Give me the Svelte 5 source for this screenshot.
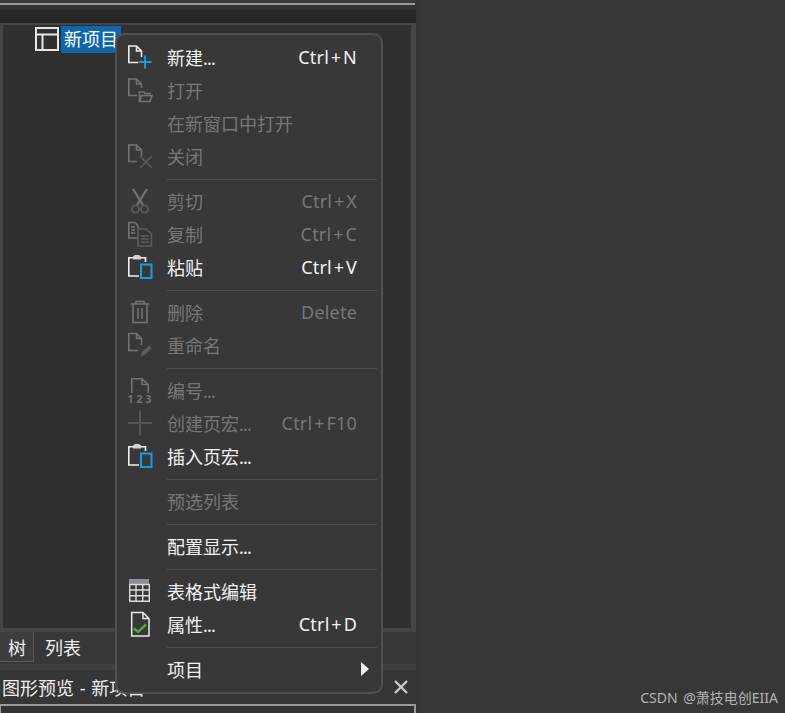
<script>
  const groups = [
    [
      { icon: 'new', label: '新建', dots: true, key: 'Ctrl+N', on: true },
      { icon: 'open', label: '打开' },
      { label: '在新窗口中打开' },
      { icon: 'close', label: '关闭' }
    ],
    [
      { icon: 'cut', label: '剪切', key: 'Ctrl+X' },
      { icon: 'copy', label: '复制', key: 'Ctrl+C' },
      { icon: 'paste', label: '粘贴', key: 'Ctrl+V', on: true }
    ],
    [
      { icon: 'trash', label: '删除', key: 'Delete' },
      { icon: 'rename', label: '重命名' }
    ],
    [
      { icon: 'number', label: '编号', dots: true },
      { icon: 'plus', label: '创建页宏', dots: true, key: 'Ctrl+F10' },
      { icon: 'paste', label: '插入页宏', dots: true, on: true }
    ],
    [{ label: '预选列表' }],
    [{ label: '配置显示', dots: true, on: true }],
    [
      { icon: 'table', label: '表格式编辑', on: true },
      { icon: 'props', label: '属性', dots: true, key: 'Ctrl+D', on: true }
    ],
    [{ label: '项目', on: true, arrow: true }]
  ];
</script>

<div class="screen">
  <div class="left">
    <div class="topfield"></div>
    <div class="topbar"></div>
    <div class="tree">
      <div class="node">
        <svg class="nodeicon" width="26" height="26" viewBox="0 0 26 26" fill="none" stroke="#e8e8e8" stroke-width="2">
          <rect x="2" y="2" width="22" height="22" />
          <path d="M2 8.5H24M8.5 8.5V24" />
        </svg>
        <span class="sel">新项目</span>
      </div>
    </div>
    <div class="tabs">
      <div class="tab active">树</div>
      <div class="tab">列表</div>
    </div>
    <div class="band"></div>
    <div class="titlebar">
      <span class="title">图形预览 - 新项目</span>
      <svg width="14" height="14" viewBox="0 0 14 14" stroke="#c8c8c8" stroke-width="2.4">
        <path d="M1 1L13 13M13 1L1 13" />
      </svg>
    </div>
    <div class="bottomfield"></div>
  </div>
  <div class="right"></div>

  <div class="menu">
    {#each groups as group, g}
      {#if g > 0}
        <div class="sep"></div>
      {/if}
      {#each group as item}
        <div class="row" class:on={item.on}>
          <div class="ico">
            {#if item.icon === 'new'}
              <svg width="30" height="30" viewBox="0 0 30 30" fill="none" stroke="#ececec" stroke-width="1.6">
                <path d="M13 20.5H3.8V4H11.5L16.5 9V15M11.5 4V9H16.5" />
                <path d="M20 13.5V26.5M13.5 20H26.5" stroke="#1f9ce4" stroke-width="1.8" />
              </svg>
            {:else if item.icon === 'open'}
              <svg width="30" height="30" viewBox="0 0 30 30" fill="none" stroke="#737373" stroke-width="1.6">
                <path d="M12 20.5H3.8V4H11.5L16.5 9V13M11.5 4V9H16.5" />
                <path d="M14.5 26.5V17H19L20 18.5H26M14.5 26.5H25L27 20.5H16.5Z" stroke-width="1.6" />
              </svg>
            {:else if item.icon === 'close'}
              <svg width="30" height="30" viewBox="0 0 30 30" fill="none" stroke="#737373" stroke-width="1.6">
                <path d="M12 20.5H3.8V4H11.5L16.5 9V15M11.5 4V9H16.5" />
                <path d="M15 15L27 27M27 15L15 27" stroke="#5c5c5c" />
              </svg>
            {:else if item.icon === 'cut'}
              <svg width="30" height="30" viewBox="0 0 30 30" fill="none" stroke="#757575" stroke-width="2.2">
                <path d="M8 3L18 19M22 3L12 19" />
                <circle cx="10.5" cy="23" r="3.6" stroke="#5c5c5c" stroke-width="1.7" />
                <circle cx="19.5" cy="23" r="3.6" stroke="#5c5c5c" stroke-width="1.7" />
              </svg>
            {:else if item.icon === 'copy'}
              <svg width="30" height="30" viewBox="0 0 30 30" fill="none" stroke="#737373" stroke-width="1.6">
                <path d="M12 19H3.8V3.5H10L13 6.5V9M6 8H10M6 11H10M6 14H10" />
                <path d="M13 27V10H21L26.5 15V27Z" stroke="#5c5c5c" />
                <path d="M16 17H24M16 20H24M16 23H24" stroke="#5c5c5c" />
              </svg>
            {:else if item.icon === 'paste'}
              <svg width="30" height="30" viewBox="0 0 30 30" fill="none" stroke="#f0f0f0" stroke-width="1.6">
                <path d="M14 24H3.8V5.8H8M16 5.8H20.5V10" />
                <path d="M8 7.5V4.5L10 3H14L16 4.5V7.5Z" fill="#d4d4d4" stroke="none" />
                <rect x="16" y="12.5" width="10.5" height="13.5" stroke="#1a9ae0" stroke-width="2" />
              </svg>
            {:else if item.icon === 'trash'}
              <svg width="30" height="30" viewBox="0 0 30 30" fill="none" stroke="#737373" stroke-width="1.6">
                <path d="M6 7H24M11 7V4.5H19V7M8 7V25.5H22V7M13 11V22M17 11V22" />
              </svg>
            {:else if item.icon === 'rename'}
              <svg width="30" height="30" viewBox="0 0 30 30" fill="none" stroke="#737373" stroke-width="1.6">
                <path d="M13 20.5H3.8V3.5H11.5L16.5 8.5V15M11.5 3.5V8.5H16.5" />
                <path d="M15.5 26.5L17 22L24 15.5L27 18L20 24.8Z" fill="#5c5c5c" stroke="none" />
              </svg>
            {:else if item.icon === 'number'}
              <svg width="30" height="30" viewBox="0 0 30 30" fill="none" stroke="#737373" stroke-width="1.6">
                <path d="M6.8 18V3.8H17L23.2 9.5V18M17 3.8V9.5H23.2" />
                <text x="16" y="27.5" class="nums">123</text>
              </svg>
            {:else if item.icon === 'plus'}
              <svg width="30" height="30" viewBox="0 0 30 30" fill="none" stroke="#555" stroke-width="2">
                <path d="M15 2.5V27.5M3 15H27" />
              </svg>
            {:else if item.icon === 'table'}
              <svg width="30" height="30" viewBox="0 0 30 30" fill="none" stroke="#dcdcdc" stroke-width="1.4">
                <rect x="4" y="3" width="20" height="5.5" fill="#8a8f96" stroke="none" />
                <path d="M4.7 8.5H24.3V25.3H4.7ZM4.7 14H24.3M4.7 19.7H24.3M11 8.5V25.3M17.7 8.5V25.3" />
              </svg>
            {:else if item.icon === 'props'}
              <svg width="30" height="30" viewBox="0 0 30 30" fill="none" stroke="#e8e8e8" stroke-width="1.5">
                <path d="M6.7 27V3.5H18L24 9.5V27ZM18 3.5V9.5H24" />
                <path d="M9 19.5L13 23L21 15.5" stroke="#4ea93f" stroke-width="2.4" />
              </svg>
            {/if}
          </div>
          <span class="label">{item.label}{#if item.dots}<span class="dots">...</span>{/if}</span>
          {#if item.key}
            <span class="key">
              {#if item.key.includes('+')}Ctrl<span class="plus">+</span>{item.key.split('+')[1]}{:else}{item.key}{/if}
            </span>
          {/if}
          {#if item.arrow}<span class="arrow"></span>{/if}
        </div>
      {/each}
    {/each}
  </div>

  <div class="mark">CSDN @萧技电创EIIA</div>
</div>

<style>
  :global(body) {
    margin: 0;
    background: #373737;
  }
  .screen {
    position: relative;
    display: flex;
    width: 785px;
    height: 713px;
    overflow: hidden;
    font-family: "Noto Sans", "Noto Sans CJK SC", sans-serif;
    font-size: 18px;
    color: #efefef;
  }
  .left {
    display: flex;
    flex: none;
    flex-direction: column;
    width: 416px;
    background: #363636;
    border-right: 4px solid #333;
  }
  .right {
    flex: 1;
    background: #373737;
  }
  .topfield {
    height: 5px;
    flex: none;
    box-sizing: border-box;
    background: #3a3a3a;
    border-bottom: 2px solid #9a9a9a;
    margin-right: 1px;
  }
  .topbar {
    height: 18px;
    flex: none;
    box-sizing: border-box;
    border-top: 5px solid #333;
    background: #272727;
  }
  .tree {
    height: 609px;
    flex: none;
    box-sizing: border-box;
    background: #303030;
    border-style: solid;
    border-color: #464646;
    border-width: 2px 5px 4px 3px;
  }
  .node {
    display: flex;
    align-items: center;
    padding-left: 31px;
    gap: 1px;
    height: 28px;
  }
  .nodeicon {
    flex: none;
  }
  .sel {
    height: 27px;
    line-height: 26px;
    padding: 0 3px;
    background: #0f66ad;
    color: #fff;
  }
  .tabs {
    display: flex;
    height: 32px;
    flex: none;
    background: #383838;
  }
  .tab {
    line-height: 32px;
    padding: 0 11px;
  }
  .tab.active {
    width: 34px;
    height: 30px;
    padding: 0 0 0 1px;
    box-sizing: border-box;
    text-align: center;
    background: #3d3d3d;
    border-right: 1px solid #5a5a5a;
    border-bottom: 1px solid #5a5a5a;
  }
  .band {
    height: 6px;
    flex: none;
    background: #404040;
  }
  .titlebar {
    display: flex;
    align-items: center;
    justify-content: space-between;
    height: 34px;
    flex: none;
    padding: 0 8px 0 2px;
    background: #363636;
  }
  .title {
    word-spacing: 1px;
  }
  .bottomfield {
    height: 9px;
    flex: none;
    background: #333;
    border-top: 2px solid #9a9a9a;
    border-right: 2px solid #9a9a9a;
    border-left: 1px solid #9a9a9a;
  }
  .menu {
    position: absolute;
    left: 115px;
    top: 33px;
    width: 268px;
    height: 661px;
    box-sizing: border-box;
    padding-top: 5px;
    background: #383838;
    border: 2px solid #505050;
    border-radius: 10px;
  }
  .row {
    display: flex;
    align-items: center;
    height: 33px;
    padding-right: 24px;
    color: #777;
  }
  .row.on {
    color: #f2f2f2;
  }
  .ico {
    flex: none;
    width: 30px;
    height: 30px;
    margin-left: 8px;
    margin-right: 12px;
    margin-top: 1px;
  }
  .ico svg {
    display: block;
  }
  .label {
    flex: 1;
    white-space: nowrap;
  }
  .dots {
    letter-spacing: -0.8px;
  }
  .key {
    white-space: nowrap;
    letter-spacing: 0.2px;
  }
  .plus {
    margin: 0 1.8px;
  }
  .arrow {
    width: 0;
    height: 0;
    margin-right: -12px;
    border-left: 8px solid #f0f0f0;
    border-top: 7px solid transparent;
    border-bottom: 7px solid transparent;
  }
  .sep {
    height: 1px;
    margin: 7px 4px 4px 50px;
    background: #505050;
  }
  .nums {
    fill: #737373;
    stroke: none;
    font-size: 10.5px;
    font-weight: 700;
    text-anchor: middle;
    letter-spacing: 3px;
  }
  .mark {
    position: absolute;
    right: 7px;
    bottom: 5px;
    font-size: 14px;
    line-height: 20px;
    word-spacing: 2px;
    color: #b4b4b4;
    white-space: nowrap;
  }
</style>
